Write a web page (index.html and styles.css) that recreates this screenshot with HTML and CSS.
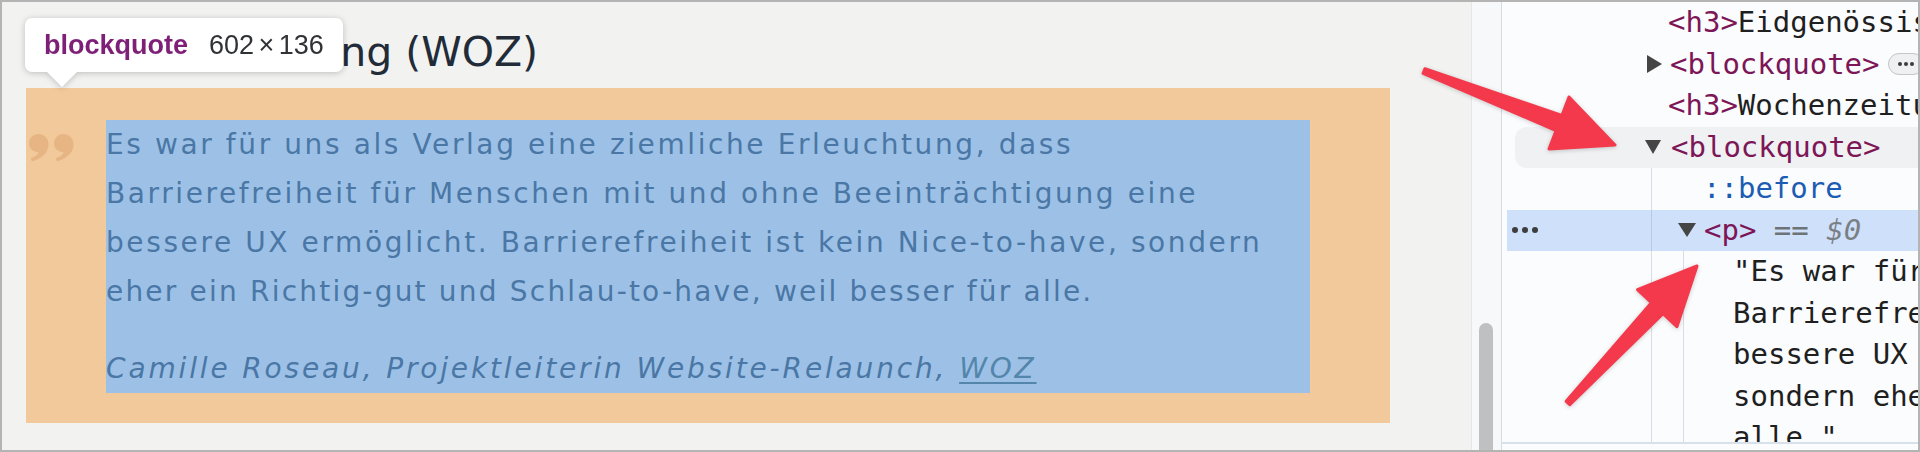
FILE: index.html
```html
<!DOCTYPE html>
<html lang="de">
<head>
<meta charset="utf-8">
<title>Blockquote inspection</title>
<link rel="stylesheet" href="styles.css">
</head>
<body>
<div class="frame">
  <div class="viewport">
    <main class="page">
      <h3 class="heading">Wochenzeitung (WOZ)</h3>
      <div class="bq">
        <svg class="quote-mark" viewBox="0 0 48 28" aria-hidden="true">
          <path d="M11.5 0 C17.3 0 21.5 4.5 21.5 10.5 C21.5 18 16 24 5 27.5 L3.5 24.5 C8.5 22.5 11 20.3 11.8 18.2 C6.3 18 2 14.5 2 9.5 C2 4.2 6.2 0 11.5 0 Z"/>
          <path transform="translate(25 0)" d="M11.5 0 C17.3 0 21.5 4.5 21.5 10.5 C21.5 18 16 24 5 27.5 L3.5 24.5 C8.5 22.5 11 20.3 11.8 18.2 C6.3 18 2 14.5 2 9.5 C2 4.2 6.2 0 11.5 0 Z"/>
        </svg>
        <div class="bq-body">
          <p class="quote">Es war für uns als Verlag eine ziemliche Erleuchtung, dass<br>Barrierefreiheit für Menschen mit und ohne Beeinträchtigung eine<br>bessere UX ermöglicht. Barrierefreiheit ist kein Nice-to-have, sondern<br><span class="tight">eher ein Richtig-gut und Schlau-to-have, weil besser für alle.</span></p>
          <p class="cite">Camille Roseau, Projektleiterin Website-Relaunch, <a class="cite-link" href="#">WOZ</a></p>
        </div>
      </div>
      <div class="tooltip">
        <span class="tt-tag">blockquote</span>
        <span class="tt-size">602 × 136</span>
      </div>
    </main>
    <div class="scrollbar"><div class="thumb"></div></div>
  </div>

  <aside class="devtools">
    <div class="tree">
      <div class="row r-tag"><span class="tag">&lt;h3&gt;</span><span class="txt">Eidgenössische Kommission</span></div>
      <div class="row r-tri"><span class="tri tri-r"></span><span class="tag">&lt;blockquote&gt;</span><span class="pill"><svg viewBox="0 0 16 4" class="pill-dots"><circle cx="2" cy="2" r="2"/><circle cx="8" cy="2" r="2"/><circle cx="14" cy="2" r="2"/></svg></span></div>
      <div class="row r-tag"><span class="tag">&lt;h3&gt;</span><span class="txt">Wochenzeitung (WOZ)</span></div>
      <div class="row r-hover"><span class="tri tri-d"></span><span class="tag">&lt;blockquote&gt;</span></div>
      <div class="kids1">
        <div class="row r-pseudo"><span class="pseudo">::before</span></div>
        <div class="row r-selected">
          <svg class="dots" viewBox="0 0 26 6"><circle cx="3" cy="3" r="3"/><circle cx="13" cy="3" r="3"/><circle cx="23" cy="3" r="3"/></svg>
          <span class="tri tri-d tri-sel"></span><span class="tag">&lt;p&gt;</span><span class="eq"> == </span><span class="dollar">$0</span>
        </div>
        <div class="kids2">
          <div class="row r-text">"Es war für uns als Verlag eine ziemliche</div>
          <div class="row r-text">Barrierefreiheit für Menschen mit und ohne</div>
          <div class="row r-text">bessere UX ermöglicht. Barrierefreiheit ist</div>
          <div class="row r-text">sondern eher ein Richtig-gut und Schlau-to-have</div>
          <div class="row r-text">alle."</div>
        </div>
      </div>
    </div>
  </aside>

  <svg class="arrows" viewBox="0 0 1920 452" aria-hidden="true">
    <polygon points="1424.9,68.7 1561.9,115.5 1569,97 1615,145 1549,149 1556.1,130.5 1423.1,73.3"/>
    <polygon points="1566.2,401.3 1651.4,302.7 1637.5,289.7 1697,266 1676.9,326.7 1663,313.7 1569.8,404.7"/>
  </svg>
</div>
</body>
</html>
```
FILE: styles.css
```css
* {
  box-sizing: border-box;
  margin: 0;
  padding: 0;
}

html,
body {
  width: 1920px;
  height: 452px;
  overflow: hidden;
  background: #ffffff;
}

.frame {
  position: relative;
  display: flex;
  width: 1920px;
  height: 452px;
  border: 2px solid #b4b4b4;
  background: #f2f3f1;
  overflow: hidden;
}

/* ---------- page viewport ---------- */
.viewport {
  display: flex;
  flex: none;
  width: 1499px;
}

.page {
  position: relative;
  flex: none;
  width: 1469px;
  padding: 25px 0 0 24px;
  background: #f2f3f1;
}

.heading {
  margin: 0 0 11px 51px;
  font: 400 41px/50px "DejaVu Sans", sans-serif;
  color: #222b38;
  white-space: nowrap;
}

.bq {
  display: flex;
  align-items: flex-start;
  width: 1364px;
  padding: 32px 80px 30px 1px;
  background: #f2c99a;
}

.quote-mark {
  flex: none;
  width: 48px;
  height: 28px;
  margin: 14px 31px 0 0;
  fill: #e6b583;
}

.bq-body {
  flex: 1;
  padding: 0;
  background: #9dc1e6;
  color: #4a77a5;
  font: 400 28px/49px "DejaVu Sans", sans-serif;
  letter-spacing: 2.6px;
  white-space: nowrap;
}

.tight {
  letter-spacing: 2.2px;
}

.cite {
  margin-top: 28px;
  font-style: italic;
  letter-spacing: 2.85px;
}

.cite-link {
  color: #5386aa;
  text-decoration: underline;
  text-decoration-thickness: 2px;
  text-underline-offset: 4px;
}

/* tooltip */
.tooltip {
  position: absolute;
  left: 23px;
  top: 16px;
  display: flex;
  align-items: center;
  gap: 21px;
  height: 54px;
  padding: 0 19px;
  background: #ffffff;
  border-radius: 7px;
  font-family: "Liberation Sans", Arial, sans-serif;
  font-size: 27px;
  filter: drop-shadow(0 1px 3px rgba(0, 0, 0, 0.22));
}

.tooltip::after {
  content: "";
  position: absolute;
  left: 22px;
  top: 100%;
  border-left: 15px solid transparent;
  border-right: 15px solid transparent;
  border-top: 15px solid #ffffff;
}

.tt-tag {
  font-weight: 700;
  color: #7e1f78;
}

.tt-size {
  color: #303236;
  word-spacing: -3px;
}

/* page scrollbar */
.scrollbar {
  flex: none;
  width: 30px;
  padding: 321px 0 0 7px;
  border-left: 1px solid #e3e6ea;
  background: #f7f8fa;
  overflow: hidden;
}

.thumb {
  width: 14px;
  height: 150px;
  border-radius: 7px;
  background: #bec0c1;
}

/* ---------- devtools ---------- */
.devtools {
  flex: 1;
  min-width: 0;
  border-left: 1px solid #d5dce5;
  background: #fafcfe;
  font: 400 29px/41.5px "DejaVu Sans Mono", monospace;
  color: #1f1f1f;
}

.tree {
  height: 442px;
  border-bottom: 2px solid #d8e0ea;
  overflow: hidden;
}

.row {
  display: flex;
  align-items: center;
  height: 41.5px;
  white-space: pre;
  overflow: hidden;
}

.tag {
  color: #7d1657;
}

.txt {
  color: #1f1f1f;
}

.pseudo {
  color: #1c5cb3;
}

.eq {
  color: #6e7378;
}

.dollar {
  color: #7a7f85;
  font-style: italic;
}

.tri {
  flex: none;
  width: 0;
  height: 0;
}

.tri-r {
  border-left: 15px solid #454545;
  border-top: 9px solid transparent;
  border-bottom: 9px solid transparent;
  margin-right: 8px;
}

.tri-d {
  border-top: 14px solid #454545;
  border-left: 8.5px solid transparent;
  border-right: 8.5px solid transparent;
  margin-right: 10px;
}

.r-tag {
  padding-left: 166px;
}

.r-tri {
  padding-left: 145px;
}

.r-hover {
  margin-left: 13px;
  padding-left: 130px;
  background: #eff1f3;
  border-radius: 12px 0 0 12px;
}

.pill {
  flex: none;
  display: flex;
  align-items: center;
  justify-content: center;
  width: 36px;
  height: 22px;
  margin-left: 8px;
  border: 1.5px solid #c3c6ca;
  border-radius: 11px;
  background: #eef0f2;
}

.pill-dots {
  width: 16px;
  height: 4px;
  fill: #3c3c3c;
}

.kids1 {
  background: linear-gradient(#d6dde6, #d6dde6) no-repeat 149px 0 / 1px 100%;
}

.r-pseudo {
  padding-left: 201px;
}

.r-selected {
  margin-left: 5px;
  padding-left: 5px;
  background:
    linear-gradient(#b8c9e2, #b8c9e2) no-repeat 144px 0 / 1px 100%,
    #cfe0fa;
}

.dots {
  flex: none;
  width: 26px;
  height: 6px;
  fill: #3d3d3d;
}

.tri-sel {
  margin-left: 140px;
  border-top-width: 14px;
  border-left-width: 9px;
  border-right-width: 9px;
  margin-right: 8px;
}

.kids2 {
  background: linear-gradient(#d6dde6, #d6dde6) no-repeat 181px 0 / 1px 100%;
}

.r-text {
  padding-left: 231px;
}

/* ---------- annotation arrows ---------- */
.arrows {
  position: absolute;
  left: -2px;
  top: -2px;
  width: 1920px;
  height: 452px;
  pointer-events: none;
  fill: #f3394b;
  stroke: #f3394b;
  stroke-width: 3;
  stroke-linejoin: round;
  filter: drop-shadow(0 1px 2px rgba(0, 0, 0, 0.2));
}
```
